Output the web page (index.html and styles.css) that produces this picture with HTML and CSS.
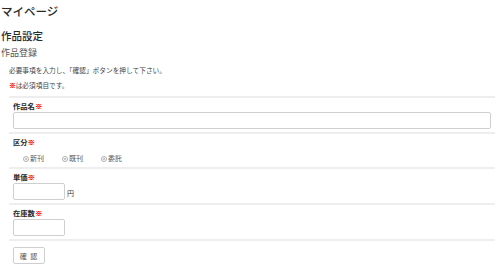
FILE: index.html
```html
<!DOCTYPE html>
<html lang="ja">
<head>
<meta charset="utf-8">
<link rel="stylesheet" href="styles.css">
</head>
<body>
<h1 class="page-title">マイページ</h1>
<h2 class="section-title">作品設定</h2>
<h3 class="sub-title">作品登録</h3>
<p class="note">必要事項を入力し、「確認」ボタンを押して下さい。</p>
<p class="note note-req"><span class="req">※</span>は必須項目です。</p>
<form class="form">
  <div class="row">
    <div class="label">作品名<span class="req">※</span></div>
    <input class="input input-wide" type="text">
  </div>
  <div class="row">
    <div class="label">区分<span class="req">※</span></div>
    <div class="radios">
      <label class="radio"><span class="dot"></span>新刊</label>
      <label class="radio"><span class="dot"></span>既刊</label>
      <label class="radio"><span class="dot"></span>委託</label>
    </div>
  </div>
  <div class="row">
    <div class="label">単価<span class="req">※</span></div>
    <div class="inline">
      <input class="input input-short" type="text"><span class="unit">円</span>
    </div>
  </div>
  <div class="row">
    <div class="label">在庫数<span class="req">※</span></div>
    <input class="input input-short" type="text">
  </div>
  <div class="row row-button">
    <button class="button" type="button">確 認</button>
  </div>
</form>
</body>
</html>
```
FILE: styles.css
```css
html, body {
  margin: 0;
  padding: 0;
  background: #fff;
}
body {
  font-family: "Noto Sans CJK JP", "Noto Sans", sans-serif;
  color: #333;
}
.page-title {
  margin: 3px 0 0 1px;
  font-size: 11.5px;
  line-height: 17px;
  font-weight: 500;
  color: #2a2a2a;
}
.section-title {
  margin: 9px 0 0 1px;
  font-size: 10.5px;
  line-height: 14px;
  font-weight: 500;
  color: #2a2a2a;
}
.sub-title {
  margin: 4px 0 0 1px;
  font-size: 9px;
  line-height: 12px;
  font-weight: 400;
  color: #555;
}
.note {
  margin: 6px 0 0 9px;
  font-size: 6.7px;
  line-height: 10px;
  color: #444;
}
.note-req {
  margin-top: 5px;
}
.req {
  color: #ff1a1a;
  font-weight: 900;
  text-shadow: 0.4px 0 0 #ff1a1a, 0 0.4px 0 #ff1a1a;
}
.form {
  margin: 6px 5px 0 9px;
}
.row {
  border-top: 2px solid #eeeeee;
  padding: 4px 4px 3px 4px;
}
.label {
  font-size: 7.3px;
  line-height: 9px;
  height: 9px;
  font-weight: 700;
  color: #2a2a2a;
  margin-bottom: 1px;
}
.input {
  display: block;
  box-sizing: border-box;
  height: 17px;
  border: 1px solid #cfcfcf;
  border-radius: 2px;
  background: #fff;
  padding: 0 3px;
  margin: 0;
  outline: none;
}
.input-wide {
  width: 100%;
}
.input-short {
  width: 52px;
}
.inline {
  display: flex;
  align-items: center;
}
.unit {
  font-size: 7px;
  line-height: 10px;
  color: #333;
  margin-left: 2px;
  padding-top: 2px;
}
.radios {
  display: flex;
  margin: 6px 0 0 10px;
  height: 11px;
  align-items: center;
}
.radio {
  display: flex;
  align-items: center;
  font-size: 7px;
  line-height: 11px;
  color: #555;
  width: 39px;
}
.dot {
  box-sizing: border-box;
  width: 6px;
  height: 6px;
  border: 1px solid #b0b0b0;
  border-radius: 50%;
  background: radial-gradient(circle, #c8c8c8 0 1.2px, #fff 1.6px);
  margin-right: 1px;
}
.row-button {
  padding-top: 6px;
}
.button {
  display: block;
  box-sizing: border-box;
  width: 32px;
  height: 17px;
  padding: 0;
  border: 1px solid #cfcfcf;
  border-radius: 2px;
  background: #fff;
  font-family: "Noto Sans CJK JP", sans-serif;
  font-size: 7px;
  color: #555;
  letter-spacing: 1px;
}
```
